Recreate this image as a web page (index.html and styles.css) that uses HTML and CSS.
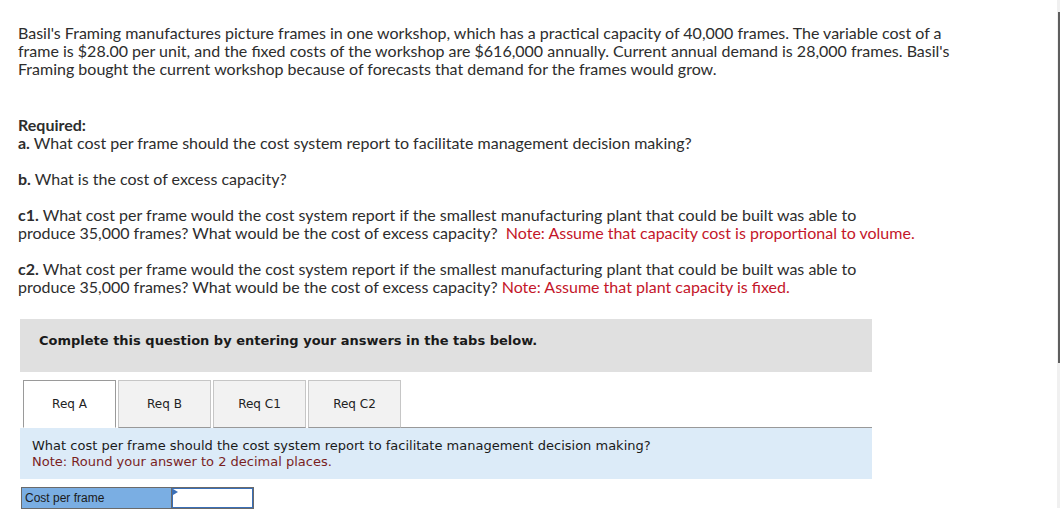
FILE: index.html
```html
<!DOCTYPE html>
<html>
<head>
<meta charset="utf-8">
<link rel="stylesheet" href="styles.css">
</head>
<body>
<div class="page">
  <p class="intro">Basil's Framing manufactures picture frames in one workshop, which has a practical capacity of 40,000 frames. The variable cost of a frame is $28.00 per unit, and the fixed costs of the workshop are $616,000 annually. Current annual demand is 28,000 frames. Basil's Framing bought the current workshop because of forecasts that demand for the frames would grow.</p>

  <div class="required">
    <p class="req-title">Required:</p>
    <p><b>a.</b> What cost per frame should the cost system report to facilitate management decision making?</p>
    <p class="gap"><b>b.</b> What is the cost of excess capacity?</p>
    <p class="gap"><b>c1.</b> What cost per frame would the cost system report if the smallest manufacturing plant that could be built was able to<br>produce 35,000 frames? What would be the cost of excess capacity? &nbsp;<span class="note">Note: Assume that capacity cost is proportional to volume.</span></p>
    <p class="gap"><b>c2.</b> What cost per frame would the cost system report if the smallest manufacturing plant that could be built was able to<br>produce 35,000 frames? What would be the cost of excess capacity? <span class="note">Note: Assume that plant capacity is fixed.</span></p>
  </div>

  <div class="widget">
    <div class="instructions">Complete this question by entering your answers in the tabs below.</div>
    <div class="tabs">
      <div class="tab active">Req A</div>
      <div class="tab">Req B</div>
      <div class="tab">Req C1</div>
      <div class="tab">Req C2</div>
      <div class="tab-fill"></div>
    </div>
    <div class="panel">
      <div>What cost per frame should the cost system report to facilitate management decision making?</div>
      <div class="panel-note">Note: Round your answer to 2 decimal places.</div>
    </div>
    <div class="answer">
      <div class="answer-label">Cost per frame</div>
      <div class="answer-input"><span class="flag"></span></div>
    </div>
  </div>
</div>
<div class="scrollbar"><div class="thumb"></div></div>
</body>
</html>
```

FILE: styles.css
```css
html, body {
  margin: 0;
  padding: 0;
  background: #fff;
}

.page {
  padding: 24px 0 0 18px;
  width: 960px;
  font-family: Lato, "Liberation Sans", sans-serif;
  font-size: 16px;
  line-height: 18px;
  color: #2d2d2d;
}

p {
  margin: 0;
}

.intro {
  width: 940px;
}

.required {
  margin-top: 38px;
}

.required b,
.req-title {
  font-weight: 700;
}

.gap {
  margin-top: 18px;
}

.note {
  color: #c4162a;
}

.widget {
  margin-top: 23px;
  margin-left: 2px;
  width: 852px;
  font-family: "DejaVu Sans", Verdana, sans-serif;
  font-size: 13px;
}

.instructions {
  background: #e0e0e0;
  height: 53px;
  box-sizing: border-box;
  padding: 14px 0 0 19px;
  line-height: 16px;
  font-weight: 700;
  color: #1a1a1a;
}

.tabs {
  display: flex;
  margin-top: 8px;
  padding-left: 3px;
  gap: 2px;
  align-items: flex-end;
}

.tab {
  width: 91px;
  height: 46px;
  display: flex;
  align-items: center;
  justify-content: center;
  background: #f2f2f2;
  border: 1px solid #c6c6c6;
  border-bottom: 1px solid #999;
  font-size: 12px;
  color: #222;
}

.tab.active {
  background: #fff;
  border: 1px solid #9a9a9a;
  border-bottom: 1px solid #fff;
}

.tab-fill {
  flex: 1;
  height: 0;
  border-bottom: 1px solid #999;
  margin-left: -2px;
}

.panel {
  background: #dcebf8;
  padding: 10px 12px 9px;
  line-height: 16px;
  color: #1a1a1a;
}

.panel-note {
  color: #7a1f1f;
}

.answer {
  display: flex;
  margin-top: 8px;
  margin-left: 1px;
  width: 231px;
  height: 20px;
  border: 1px solid #6a6a6a;
  font-family: "Liberation Sans", Arial, sans-serif;
  font-size: 12px;
}

.answer-label {
  width: 146px;
  background: #7aaee3;
  display: flex;
  align-items: center;
  padding-left: 3px;
  color: #1a1a1a;
  border-right: 1px solid #6a6a6a;
}

.answer-input {
  flex: 1;
  position: relative;
  background: #fff;
  border: 1px solid #3a6fb7;
}

.flag {
  position: absolute;
  left: 0;
  top: 0;
  width: 0;
  height: 0;
  border-top: 3px solid transparent;
  border-bottom: 3px solid transparent;
  border-left: 5px solid #3a6fb7;
}

.scrollbar {
  position: fixed;
  right: 0;
  top: 0;
  width: 3px;
  height: 508px;
  background: #f0f0f0;
}

.thumb {
  position: absolute;
  right: 0;
  top: 12px;
  width: 2px;
  height: 351px;
  background: #5e5e5e;
}
```
